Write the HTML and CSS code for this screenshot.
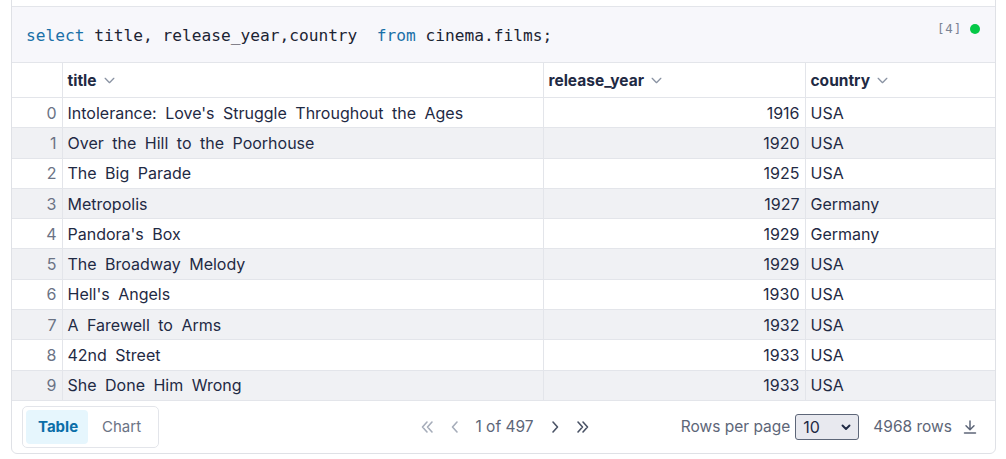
FILE: index.html
```html
<!DOCTYPE html>
<html>
<head>
<meta charset="utf-8">
<link rel="stylesheet" href="styles.css">
</head>
<body>
<div class="cell">
  <div class="cell-top"></div>
  <div class="code">
    <pre class="sql"><span class="kw">select</span> title, release_year,country  <span class="kw">from</span> cinema.films;</pre>
    <div class="status"><span class="count">[4]</span><span class="dot"></span></div>
  </div>
  <table class="grid">
    <colgroup>
      <col class="c-idx"><col class="c-title"><col class="c-year"><col class="c-country">
    </colgroup>
    <thead>
      <tr>
        <th></th>
        <th><span class="hd">title</span><svg class="chev" viewBox="0 0 12 12"><path d="M2 4 L6 8 L10 4" fill="none" stroke="#8a93a3" stroke-width="1.2" stroke-linecap="round" stroke-linejoin="round"/></svg></th>
        <th><span class="hd">release_year</span><svg class="chev" viewBox="0 0 12 12"><path d="M2 4 L6 8 L10 4" fill="none" stroke="#8a93a3" stroke-width="1.2" stroke-linecap="round" stroke-linejoin="round"/></svg></th>
        <th><span class="hd">country</span><svg class="chev" viewBox="0 0 12 12"><path d="M2 4 L6 8 L10 4" fill="none" stroke="#8a93a3" stroke-width="1.2" stroke-linecap="round" stroke-linejoin="round"/></svg></th>
      </tr>
    </thead>
    <tbody>
      <tr><td class="idx">0</td><td>Intolerance: Love's Struggle Throughout the Ages</td><td class="num">1916</td><td class="last">USA</td></tr>
      <tr class="alt"><td class="idx">1</td><td>Over the Hill to the Poorhouse</td><td class="num">1920</td><td class="last">USA</td></tr>
      <tr><td class="idx">2</td><td>The Big Parade</td><td class="num">1925</td><td class="last">USA</td></tr>
      <tr class="alt"><td class="idx">3</td><td>Metropolis</td><td class="num">1927</td><td class="last">Germany</td></tr>
      <tr><td class="idx">4</td><td>Pandora's Box</td><td class="num">1929</td><td class="last">Germany</td></tr>
      <tr class="alt"><td class="idx">5</td><td>The Broadway Melody</td><td class="num">1929</td><td class="last">USA</td></tr>
      <tr><td class="idx">6</td><td>Hell's Angels</td><td class="num">1930</td><td class="last">USA</td></tr>
      <tr class="alt"><td class="idx">7</td><td>A Farewell to Arms</td><td class="num">1932</td><td class="last">USA</td></tr>
      <tr><td class="idx">8</td><td>42nd Street</td><td class="num">1933</td><td class="last">USA</td></tr>
      <tr class="alt"><td class="idx">9</td><td>She Done Him Wrong</td><td class="num">1933</td><td class="last">USA</td></tr>
    </tbody>
  </table>
  <div class="footer">
    <div class="tabs">
      <span class="tab active">Table</span>
      <span class="tab">Chart</span>
    </div>
    <div class="pager">
      <svg class="pg dim" viewBox="0 0 16 16"><path d="M8 3 L3.5 8 L8 13 M13 3 L8.5 8 L13 13" fill="none" stroke="currentColor" stroke-width="1.6" stroke-linecap="round" stroke-linejoin="round"/></svg>
      <svg class="pg dim" viewBox="0 0 16 16"><path d="M10 3 L5.5 8 L10 13" fill="none" stroke="currentColor" stroke-width="1.6" stroke-linecap="round" stroke-linejoin="round"/></svg>
      <span class="pages">1 of 497</span>
      <svg class="pg" viewBox="0 0 16 16"><path d="M6 3 L10.5 8 L6 13" fill="none" stroke="currentColor" stroke-width="1.6" stroke-linecap="round" stroke-linejoin="round"/></svg>
      <svg class="pg" viewBox="0 0 16 16"><path d="M3 3 L7.5 8 L3 13 M8 3 L12.5 8 L8 13" fill="none" stroke="currentColor" stroke-width="1.6" stroke-linecap="round" stroke-linejoin="round"/></svg>
    </div>
    <div class="right">
      <span class="rpp">Rows per page</span>
      <span class="select"><span>10</span><svg class="selchev" viewBox="0 0 12 12"><path d="M2.5 4.5 L6 8 L9.5 4.5" fill="none" stroke="#1f2a44" stroke-width="1.9" stroke-linecap="round" stroke-linejoin="round"/></svg></span>
      <span class="rows">4968 rows</span>
      <svg class="dl" viewBox="0 0 16 16"><path d="M8 2 V10.5 M4 6.8 L8 10.8 L12 6.8 M2.5 14 H13.5" fill="none" stroke="#5d6678" stroke-width="1.5" stroke-linecap="round" stroke-linejoin="round"/></svg>
    </div>
  </div>
</div>
</body>
</html>
```

FILE: styles.css
```css
html, body {
  margin: 0;
  padding: 0;
  background: #ffffff;
}
body {
  font-family: "Inter", "Noto Sans", sans-serif;
  color: #1f2a44;
}
.cell {
  width: 983px;
  margin-left: 11px;
  margin-top: -10px;
  border: 1px solid #dfe1e6;
  border-radius: 0 0 6px 6px;
  background: #fff;
  overflow: hidden;
}
.cell-top {
  height: 15px;
  border-bottom: 1px solid #e3e5ea;
  background: #fff;
}
.code {
  position: relative;
  height: 55px;
  background: #f7f7fb;
  border-bottom: 1px solid #e3e5ea;
  display: flex;
  align-items: center;
}
.sql {
  margin: 0 0 0 14px;
  font-family: "DejaVu Sans Mono", "Liberation Mono", monospace;
  font-size: 16.2px;
  color: #1c2433;
  padding-top: 1px;
}
.kw { color: #1a70a8; }
.status {
  position: absolute;
  right: 15px;
  top: 14px;
  display: flex;
  align-items: center;
  gap: 8px;
}
.count {
  font-family: "DejaVu Sans Mono", monospace;
  font-size: 12.5px;
  color: #7b8494;
  letter-spacing: 0.8px;
}
.dot {
  width: 10px;
  height: 10px;
  border-radius: 50%;
  background: #05c847;
}
.grid {
  width: 983px;
  border-collapse: collapse;
  table-layout: fixed;
  font-size: 16px;
}
.c-idx { width: 50px; }
.c-title { width: 481px; }
.c-year { width: 262px; }
.c-country { width: 190px; }
.grid th {
  height: 34px;
  text-align: left;
  padding: 0 5px;
  border-bottom: 1px solid #e3e5ea;
  border-left: 1px solid #e3e5ea;
  font-weight: 700;
  font-size: 15.5px;
  color: #1f2a44;
  white-space: nowrap;
}
.grid th:first-child { border-left: none; }
.hd { vertical-align: middle; }
.chev {
  width: 13px;
  height: 13px;
  margin-left: 6px;
  vertical-align: middle;
}
.grid td {
  height: 29.3px;
  padding: 0 5px;
  border-bottom: 1px solid #e3e5ea;
  border-left: 1px solid #e3e5ea;
  white-space: nowrap;
  word-spacing: 4px;
  color: #1f2a44;
}
.grid td.idx {
  border-left: none;
  text-align: right;
  color: #6b7385;
  padding-right: 5px;
}
.grid td.num { text-align: right; }
.grid tr.alt td { background: #f0f1f4; }
.footer {
  height: 52px;
  display: grid;
  grid-template-columns: 1fr auto 1fr;
  align-items: center;
  padding: 0 17px 0 10px;
}
.tabs {
  justify-self: start;
  display: flex;
  padding: 3px;
  border: 1px solid #e3e5ea;
  border-radius: 5px;
}
.tab {
  height: 34px;
  line-height: 34px;
  padding: 0 14px 0 14px;
  font-size: 15px;
  color: #6b7385;
  border-radius: 4px;
}
.tab.active {
  background: #e6f6fd;
  color: #0b6ea8;
  font-weight: 700;
  padding: 0 12px;
  width: 38px;
}
.pager {
  display: flex;
  align-items: center;
  color: #5d6678;
  font-size: 15.5px;
  margin-left: 10px;
}
.pg {
  width: 16px;
  height: 16px;
  color: #4a5366;
  margin: 0 6px;
}
.pg.dim { color: #a6adba; }
.pages { margin: 0 7px 0 6px; color: #5d6678; }
.right {
  justify-self: end;
  display: flex;
  align-items: center;
  color: #5d6678;
  font-size: 15.5px;
}
.rpp { margin-right: 5px; }
.select {
  width: 64px;
  height: 26px;
  box-sizing: border-box;
  border: 1px solid #5d6678;
  border-radius: 3px;
  background: #e8e9ef;
  display: flex;
  align-items: center;
  justify-content: space-between;
  padding: 0 6px 0 7px;
  margin-right: 14px;
  color: #1f2a44;
  font-size: 16px;
}
.selchev { width: 12px; height: 12px; }
.rows { margin-right: 10px; }
.dl { width: 16px; height: 16px; }
```
